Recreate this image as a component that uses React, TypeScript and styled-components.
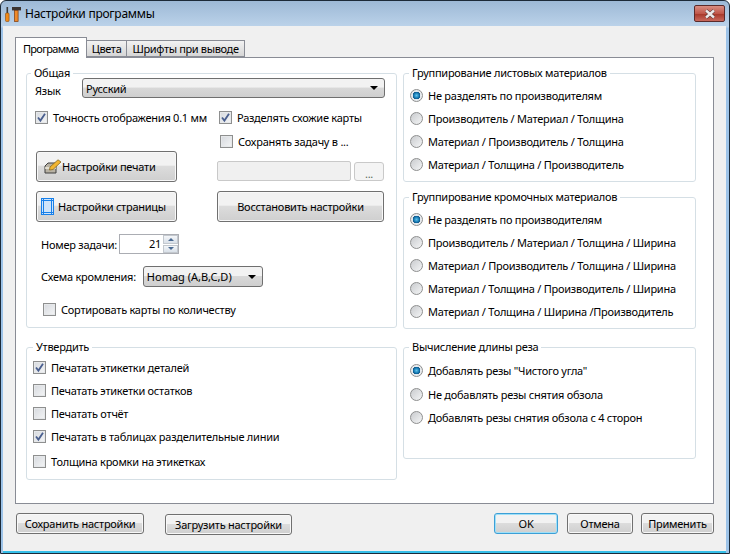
import React from 'react';
import styled, { createGlobalStyle } from 'styled-components';

const GlobalStyle = createGlobalStyle`
  html, body { margin: 0; padding: 0; background: #fff; }
  * { box-sizing: border-box; }
`;

const Window = styled.div`
  width: 730px;
  height: 554px;
  display: flex;
  flex-direction: column;
  border: 1px solid #1c2a38;
  border-radius: 6px 6px 0 0;
  background: linear-gradient(#9db9d6, #bcd3ea 26px, #9dc3e8 27px);
  padding: 0 3px 0 2px;
  font-family: 'Noto Sans', Tahoma, sans-serif;
  font-size: 11px;
  letter-spacing: -0.25px;
  color: #000;
  overflow: hidden;
`;

const TitleBar = styled.div`
  height: 25px;
  display: flex;
  align-items: center;
  gap: 4px;
  padding-left: 2px;
  font-size: 12px;
  flex: none;
`;

const CloseButton = styled.div`
  width: 31px;
  height: 17px;
  margin-left: auto;
  margin-right: 1px;
  border: 1px solid #5b2a2a;
  border-radius: 2px;
  background: linear-gradient(#d98d82, #c0574a 50%, #a83a2c 55%, #c9685c);
  display: flex;
  align-items: center;
  justify-content: center;
`;

const Client = styled.div`
  flex: 1;
  display: flex;
  flex-direction: column;
  background: #f0f0f0;
  border-bottom: 2px solid #35bfe8;
  padding: 12px 12px 0;
`;

const TabStrip = styled.div`
  display: flex;
  align-items: flex-end;
  height: 19px;
  position: relative;
  z-index: 1;
`;

const Tab = styled.div<{ $active?: boolean }>`
  height: ${p => (p.$active ? '21px' : '17px')};
  padding: 0 ${p => (p.$active ? '7px' : '5px')};
  margin-left: ${p => (p.$active ? '0' : '-1px')};
  margin-bottom: ${p => (p.$active ? '-1px' : '0')};
  letter-spacing: ${p => (p.$active ? '-0.7px' : '-0.35px')};
  display: flex;
  align-items: center;
  border: 1px solid #898c95;
  border-bottom: ${p => (p.$active ? 'none' : '1px solid #898c95')};
  background: ${p => (p.$active ? '#fff' : 'linear-gradient(#f2f2f2, #d6d6d6)')};
  z-index: ${p => (p.$active ? 2 : 0)};
`;

const TabPane = styled.div`
  width: 699px;
  height: 447px;
  background: #fff;
  border: 1px solid #898c95;
  padding: 8px 0 0 10px;
  display: grid;
  grid-template-columns: 371px 293px;
  column-gap: 6px;
  align-content: start;
`;

const Column = styled.div<{ $gap: number }>`
  display: flex;
  flex-direction: column;
  gap: ${p => p.$gap}px;
`;

const Group = styled.fieldset<{ $height: number; $pad: number; $top?: number; $mt?: number }>`
  margin: ${p => p.$mt ?? 0}px 0 0;
  padding: ${p => p.$top ?? 0}px 0 0 ${p => p.$pad}px;
  height: ${p => p.$height}px;
  min-width: 0;
  border: 1px solid #d5dfe5;
  border-radius: 3px;
`;

const Legend = styled.legend<{ $left: number }>`
  margin-left: ${p => p.$left}px;
  padding: 0 3px;
  line-height: 14px;
`;

const LanguageRow = styled.div`
  display: flex;
  align-items: flex-start;
  margin-top: -2px;
`;

const LanguageLabel = styled.span`
  width: 47px;
  padding-top: 5px;
`;

const Select = styled.div<{ $width: number }>`
  width: ${p => p.$width}px;
  display: flex;
  align-items: center;
  justify-content: space-between;
  border: 1px solid #6f6f6f;
  border-radius: 3px;
  background: linear-gradient(#f2f2f2 45%, #d8d8d8 50%, #cfcfcf);
  padding: 0 6px 0 3px;
`;

const LanguageSelect = styled(Select)`
  height: 20px;
`;

const SchemeSelect = styled(Select)`
  height: 21px;
  letter-spacing: 0;
`;

const Caret = styled.span`
  width: 0;
  height: 0;
  border-left: 4px solid transparent;
  border-right: 4px solid transparent;
  border-top: 4px solid #000;
`;

const Columns = styled.div`
  display: grid;
  grid-template-columns: 182px 167px;
  margin-top: 8px;
`;

const OptionRow = styled.div<{ $left?: number; $height?: number }>`
  display: flex;
  align-items: center;
  gap: 5px;
  height: ${p => p.$height ?? 23}px;
  margin-left: ${p => p.$left ?? 0}px;
`;

const BoxMark = styled.span`
  width: 13px;
  height: 13px;
  flex: none;
  border: 1px solid #8e8f8f;
  background: linear-gradient(135deg, #d6d9de, #f4f5f6);
  box-shadow: inset 0 0 0 1px #e6e8ea;
  display: flex;
  align-items: center;
  justify-content: center;
`;

const RadioMark = styled.span<{ $on?: boolean }>`
  width: 13px;
  height: 13px;
  flex: none;
  border-radius: 50%;
  border: 1px solid #8e8f8f;
  background: ${p =>
    p.$on
      ? 'radial-gradient(circle, #5fc3ec 0, #0d6ea8 38%, #0b4f80 46%, #e4e8ec 50%, #f0f0f0 100%)'
      : 'linear-gradient(135deg, #c9cbce, #f4f5f6)'};
`;

const Stack = styled.div`
  display: flex;
  flex-direction: column;
`;

const PushButton = styled.div<{ $width?: number; $height?: number; $focus?: boolean }>`
  width: ${p => (p.$width ? `${p.$width}px` : '100%')};
  height: ${p => p.$height ?? 21}px;
  flex: none;
  display: flex;
  align-items: center;
  justify-content: center;
  border: 1px solid ${p => (p.$focus ? '#3c9fd6' : '#707070')};
  border-radius: 3px;
  background: linear-gradient(#f2f2f2 45%, #dcdcdc 50%, #cfcfcf);
  box-shadow: ${p => (p.$focus ? 'inset 0 0 0 1px #9fe0f8' : 'inset 0 0 0 1px #f8f8f8')};
`;

const IconButton = styled(PushButton)<{ $pad: number; $gap: number; $top: number }>`
  justify-content: flex-start;
  padding-left: ${p => p.$pad}px;
  gap: ${p => p.$gap}px;
  margin: ${p => p.$top}px 0 0 1px;
`;

const PathRow = styled.div`
  display: flex;
  gap: 3px;
  height: 20px;
  margin: 7px 0 10px;
`;

const PathField = styled.div`
  flex: 1;
  border: 1px solid #c9c9c9;
  border-radius: 2px;
  background: #f0f0f0;
`;

const BrowseButton = styled.div`
  width: 30px;
  margin: 1px 0 0;
  border: 1px solid #c9c9c9;
  border-radius: 3px;
  background: #f4f4f4;
  color: #5a6a5a;
  text-align: center;
  line-height: 21px;
`;

const FieldRow = styled.div<{ $top: number; $gap: number }>`
  display: flex;
  align-items: center;
  gap: ${p => p.$gap}px;
  margin: ${p => p.$top}px 0 0 6px;
`;

const Spin = styled.div`
  width: 60px;
  height: 20px;
  display: flex;
  border: 1px solid #abadb3;
  background: #fff;
`;

const SpinValue = styled.span`
  flex: 1;
  text-align: right;
  padding-right: 2px;
  line-height: 17px;
`;

const SpinArrows = styled.div`
  width: 15px;
  display: flex;
  flex-direction: column;
  gap: 1px;
`;

const SpinArrow = styled.span<{ $down?: boolean }>`
  flex: 1;
  display: flex;
  align-items: center;
  justify-content: center;
  background: linear-gradient(#f4f6f9, #d9e0e8);
  border: 1px solid #c3c8ce;

  &::after {
    content: '';
    border-left: 3px solid transparent;
    border-right: 3px solid transparent;
    ${p => (p.$down ? 'border-top: 3px solid #4a6a92;' : 'border-bottom: 3px solid #4a6a92;')}
  }
`;

const SortRow = styled.div`
  margin-top: 11px;
`;

const Footer = styled.div`
  height: 42px;
  display: flex;
  align-items: flex-start;
  padding-left: 1px;
`;

const FooterSpacer = styled.div`
  flex: 1;
`;

const FooterSlot = styled.div<{ $left: number; $top: number }>`
  margin: ${p => p.$top}px 0 0 ${p => p.$left}px;
`;

const Check = () => (
  <svg width="11" height="11" viewBox="0 0 11 11">
    <path d="M2 5.5 L4.4 8.6 L9 1.8" fill="none" stroke="#4a5f8f" strokeWidth="1.8" />
  </svg>
);

const Option: React.FC<{ checked?: boolean; left?: number; height?: number; children: React.ReactNode }> = ({
  checked,
  left,
  height,
  children,
}) => (
  <OptionRow $left={left} $height={height}>
    <BoxMark>{checked && <Check />}</BoxMark>
    {children}
  </OptionRow>
);

const Radio: React.FC<{ on?: boolean; height?: number; children: React.ReactNode }> = ({ on, height, children }) => (
  <OptionRow $height={height}>
    <RadioMark $on={on} />
    {children}
  </OptionRow>
);

const AppIcon = () => (
  <svg width="16" height="16" viewBox="0 0 16 16">
    <rect x="1.5" y="1" width="1.6" height="6" fill="#3a3a3a" />
    <rect x="0.5" y="7" width="3.6" height="8.5" rx="1" fill="#f08a18" stroke="#8a4a10" strokeWidth="0.6" />
    <rect x="7" y="1" width="9" height="3.4" fill="#3c3430" />
    <rect x="9.5" y="4.4" width="3.6" height="11.2" fill="#ef8a2a" stroke="#7a3a10" strokeWidth="0.7" />
  </svg>
);

const CloseIcon = () => (
  <svg width="14" height="10" viewBox="0 0 14 10">
    <path d="M3 1.5 L11 8.5 M11 1.5 L3 8.5" stroke="#4a3030" strokeWidth="3.6" />
    <path d="M3 1.5 L11 8.5 M11 1.5 L3 8.5" stroke="#eeeaea" strokeWidth="2.4" />
  </svg>
);

const PrintIcon = () => (
  <svg width="18" height="15" viewBox="0 0 18 15">
    <path d="M1 7 L4 4 H12 V14 H1 Z" fill="#b8b2a4" stroke="#3f3f3f" />
    <path d="M1 9 H12" stroke="#f0ece0" strokeWidth="1.4" />
    <path d="M6 8 L14 0.8 L17 3 L9 10.5 L5.5 11 Z" fill="#f2b530" stroke="#8a6a20" strokeWidth="0.8" />
  </svg>
);

const PageIcon = () => (
  <svg width="13" height="17" viewBox="0 0 13 17">
    <rect x="0.5" y="0.5" width="12" height="16" fill="#cfe4fa" stroke="#1780ea" />
    <path d="M2.5 0 V17 M10.5 0 V17 M0 2.5 H13 M0 14.5 H13" stroke="#1780ea" />
  </svg>
);

const App: React.FC = () => (
  <>
    <GlobalStyle />
    <Window>
      <TitleBar>
        <AppIcon />
        Настройки программы
        <CloseButton>
          <CloseIcon />
        </CloseButton>
      </TitleBar>
      <Client>
        <TabStrip>
          <Tab $active>Программа</Tab>
          <Tab>Цвета</Tab>
          <Tab>Шрифты при выводе</Tab>
        </TabStrip>
        <TabPane>
          <Column $gap={12}>
            <Group $height={262} $pad={8}>
              <Legend $left={-4}>Общая</Legend>
              <LanguageRow>
                <LanguageLabel>Язык</LanguageLabel>
                <LanguageSelect $width={303}>
                  Русский
                  <Caret />
                </LanguageSelect>
              </LanguageRow>
              <Columns>
                <Stack>
                  <Option checked>Точность отображения 0.1 мм</Option>
                  <IconButton $width={141} $height={31} $pad={7} $gap={0} $top={22}>
                    <PrintIcon />
                    Настройки печати
                  </IconButton>
                  <IconButton $width={141} $height={31} $pad={4} $gap={4} $top={9}>
                    <PageIcon />
                    Настройки страницы
                  </IconButton>
                </Stack>
                <Stack>
                  <Option checked left={2}>Разделять схожие карты</Option>
                  <Option left={3} height={25}>Сохранять задачу в ...</Option>
                  <PathRow>
                    <PathField />
                    <BrowseButton>...</BrowseButton>
                  </PathRow>
                  <PushButton $height={31}>Восстановить настройки</PushButton>
                </Stack>
              </Columns>
              <FieldRow $top={12} $gap={2}>
                Номер задачи:
                <Spin>
                  <SpinValue>21</SpinValue>
                  <SpinArrows>
                    <SpinArrow />
                    <SpinArrow $down />
                  </SpinArrows>
                </Spin>
              </FieldRow>
              <FieldRow $top={12} $gap={7}>
                Схема кромления:
                <SchemeSelect $width={120}>
                  Homag (A,B,C,D)
                  <Caret />
                </SchemeSelect>
              </FieldRow>
              <SortRow>
                <Option left={8}>Сортировать карты по количеству</Option>
              </SortRow>
            </Group>
            <Group $height={140} $pad={6} $top={2}>
              <Legend $left={0}>Утвердить</Legend>
              <Option checked>Печатать этикетки деталей</Option>
              <Option>Печатать этикетки остатков</Option>
              <Option>Печатать отчёт</Option>
              <Option checked>Печатать в таблицах разделительные линии</Option>
              <Option height={27}>Толщина кромки на этикетках</Option>
            </Group>
          </Column>
          <Column $gap={8}>
            <Group $height={116} $pad={6} $top={4}>
              <Legend $left={-1}>Группирование листовых материалов</Legend>
              <Radio on>Не разделять по производителям</Radio>
              <Radio>Производитель / Материал / Толщина</Radio>
              <Radio>Материал / Производитель / Толщина</Radio>
              <Radio>Материал / Толщина / Производитель</Radio>
            </Group>
            <Group $height={139} $pad={6} $top={4}>
              <Legend $left={-1}>Группирование кромочных материалов</Legend>
              <Radio on>Не разделять по производителям</Radio>
              <Radio>Производитель / Материал / Толщина / Ширина</Radio>
              <Radio>Материал / Производитель / Толщина / Ширина</Radio>
              <Radio>Материал / Толщина / Производитель / Ширина</Radio>
              <Radio>Материал / Толщина / Ширина /Производитель</Radio>
            </Group>
            <Group $height={119} $pad={6} $top={4} $mt={3}>
              <Legend $left={-1}>Вычисление длины реза</Legend>
              <Radio on height={25}>Добавлять резы "Чистого угла"</Radio>
              <Radio>Не добавлять резы снятия обзола</Radio>
              <Radio>Добавлять резы снятия обзола с 4 сторон</Radio>
            </Group>
          </Column>
        </TabPane>
        <Footer>
          <FooterSlot $left={0} $top={9}>
            <PushButton $width={128}>Сохранить настройки</PushButton>
          </FooterSlot>
          <FooterSlot $left={21} $top={10}>
            <PushButton $width={127}>Загрузить настройки</PushButton>
          </FooterSlot>
          <FooterSpacer />
          <FooterSlot $left={0} $top={9}>
            <PushButton $width={64} $focus>OK</PushButton>
          </FooterSlot>
          <FooterSlot $left={9} $top={9}>
            <PushButton $width={66}>Отмена</PushButton>
          </FooterSlot>
          <FooterSlot $left={8} $top={9}>
            <PushButton $width={73}>Применить</PushButton>
          </FooterSlot>
        </Footer>
      </Client>
    </Window>
  </>
);

export default App;
